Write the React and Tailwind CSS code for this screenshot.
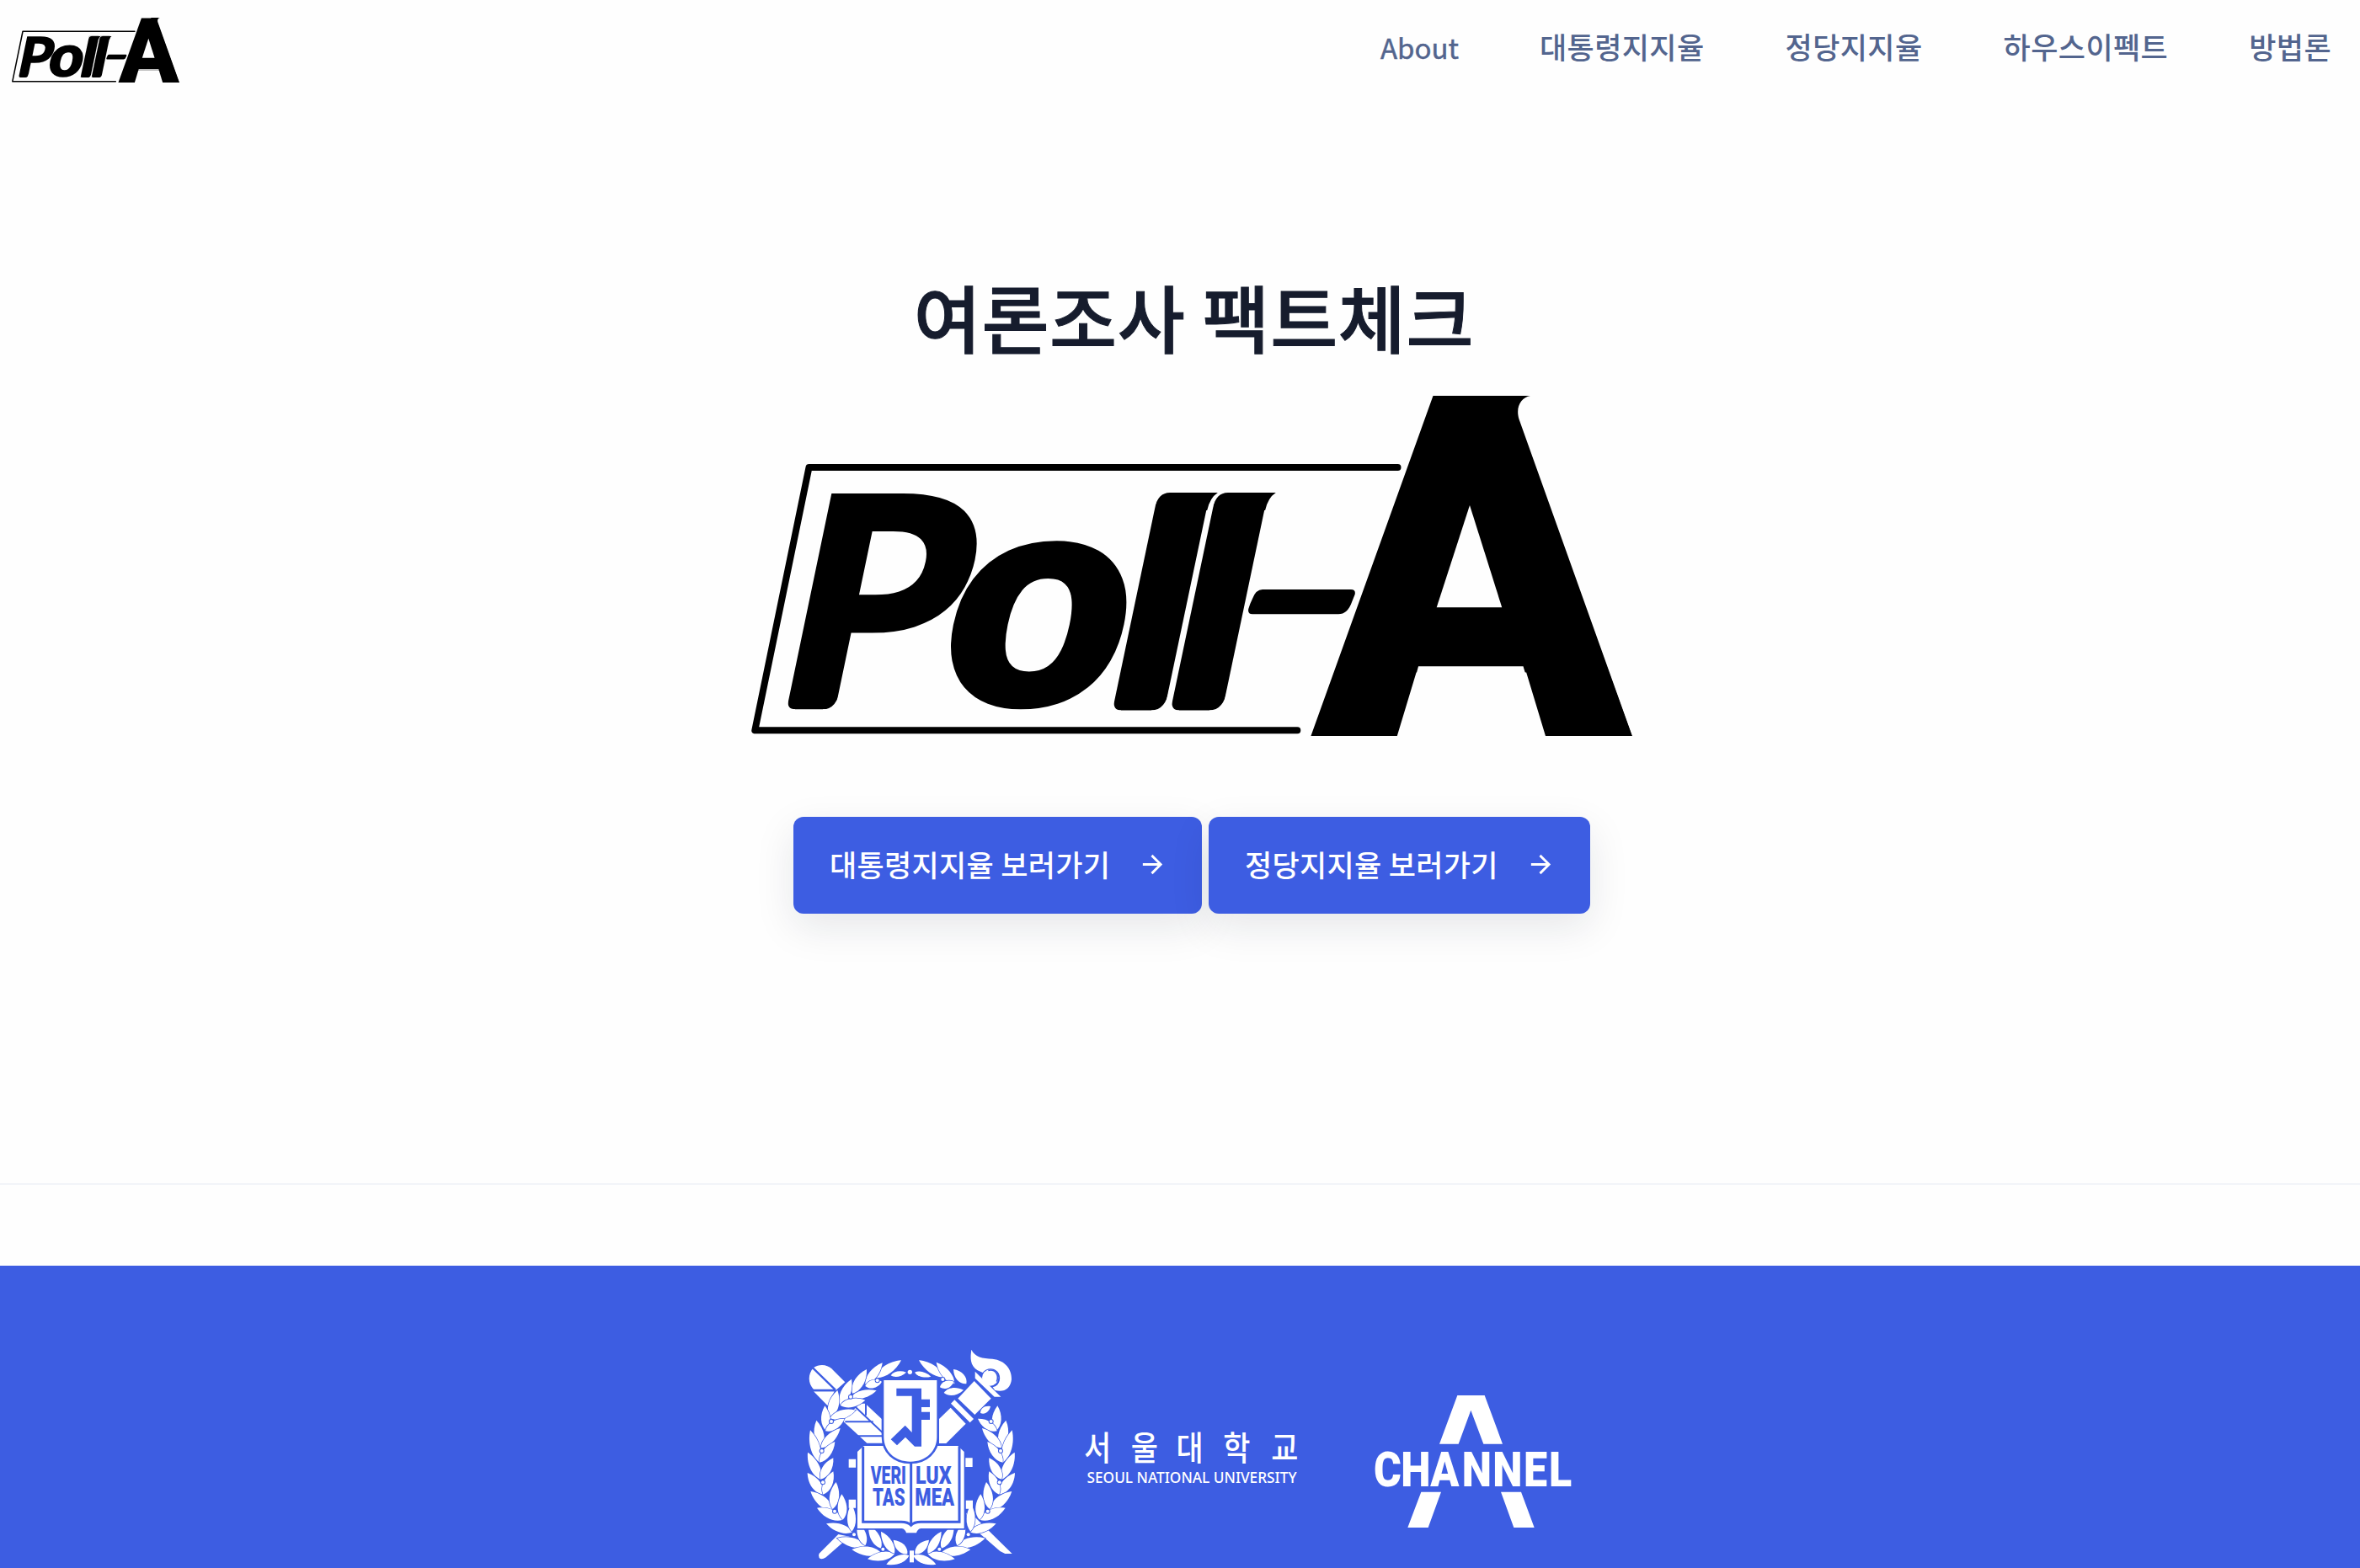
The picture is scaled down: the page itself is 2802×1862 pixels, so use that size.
import React from "react";

const NAV = ["대통령지지율", "정당지지율", "하우스이펙트", "방법론"];

function StemTrim({ dx = 0 }) {
  return (
    <g transform={`translate(${dx} 0)`}>
      <g className="fill-[#fefefe]">
        <path d="M1371 603Q1375 585 1389 584.9V583H1374.5Z" />
        <path d="M1322.6 832Q1321.5 843.5 1331 843.5V845H1318Z" />
        <path d="M1388 819Q1384 843.5 1367 843.5V846H1388Z" />
      </g>
      <path d="M1430 606L1433.2 606Q1436.5 591 1445.9 585H1430Z" />
    </g>
  );
}

function PollLogo({ className }) {
  return (
    <svg viewBox="892 470 1046 404" className={className} role="img" aria-label="Poll-A">
      <path
        d="M1659.5 555H960.5L896.3 867.3H1540.3"
        fill="none"
        stroke="#000"
        strokeWidth="8"
        strokeLinecap="round"
        strokeLinejoin="round"
      />
      <g fontSize="100" fontFamily="'Noto Sans', sans-serif">
        <text fontWeight="700" transform="matrix(3.775 0 -0.747 3.59 902 842.3)">P</text>
        <text fontWeight="800" transform="matrix(3.748 0 -0.731 3.514 1095 838.8)">o</text>
        <text fontWeight="800" transform="matrix(3.64 0 -0.714 3.401 1295.3 843.5)">l</text>
        <text fontWeight="800" transform="matrix(3.64 0 -0.714 3.401 1364.2 843.5)">l</text>
      </g>
      <g className="fill-[#fefefe]">
        <path d="M936 831Q934 842.3 944 842.3V845H930Z" />
        <path d="M998 816Q994 842.3 977 842.3V845H1000Z" />
      </g>
      <StemTrim dx={68.9} />
      <StemTrim />
      <path d="M1499 700H1604Q1610 700 1608.6 706L1605 715Q1600 729.3 1589 729.3H1487Q1481 729.3 1482.3 723Q1484 717 1487 711Q1491 700 1499 700Z" />
      <text
        fontSize="100"
        fontFamily="Roboto, sans-serif"
        fontWeight="900"
        transform="matrix(5.561 0 0 5.69 1557.5 874)"
      >
        A
      </text>
      <path d="M1760 470H1817C1806 472 1799 483 1803.6 498L1937.9 874H1925Z" />
      <path d="M1745 560L1800 730H1690Z" />
      <g className="fill-[#fefefe]">
        <path d="M1745 600L1783.2 721.2H1705.7Z" />
        <path d="M1684 791.3H1808.5L1811 799.5H1681.8Z" />
      </g>
    </svg>
  );
}

function Arrow() {
  return (
    <svg viewBox="0 0 24 24" className="size-[35px] fill-white">
      <path d="m12 4-1.41 1.41L16.17 11H4v2h12.17l-5.58 5.59L12 20l8-8z" />
    </svg>
  );
}

function CtaButton({ children, className }) {
  return (
    <a
      className={`flex h-[115px] items-center justify-between rounded-[12px] bg-[#3d5de2] pl-[43px] pr-[41px] pb-[3px] text-[35px] leading-[40px] font-medium tracking-[0.3px] whitespace-nowrap text-white shadow-[0_16px_48px_rgba(22,28,45,0.1)] ${className}`}
    >
      <span className="-mt-px">{children}</span>
      <Arrow />
    </a>
  );
}

/* Laurel leaves as [base x, base y, tip x, tip y, width] */
const UPPER_LEFT = [
  [298, 138, 390, 76, 30],
  [353, 130, 408, 119, 17],
  [262, 162, 323, 85, 28],
  [262, 168, 322, 152, 26],
  [216, 194, 267, 108, 32],
  [212, 208, 302, 184, 26],
  [173, 236, 213, 143, 32],
  [173, 236, 262, 218, 28],
  [137, 280, 163, 183, 34],
  [137, 282, 228, 254, 28],
];
const UPPER_RIGHT = [
  [542, 136, 453, 76, 28],
  [438, 119, 496, 134, 17],
  [580, 160, 515, 83, 28],
  [528, 172, 578, 152, 24],
  [622, 160, 576, 108, 28],
  [542, 192, 612, 182, 24],
  [672, 264, 708, 240, 20],
];
const SIDE = [
  [124, 328, 118, 238, 30],
  [120, 328, 188, 284, 27],
  [106, 388, 88, 290, 32],
  [104, 388, 173, 318, 28],
  [99, 440, 66, 325, 31],
  [99, 440, 154, 366, 28],
  [103, 500, 57, 404, 31],
  [103, 500, 148, 424, 30],
  [112, 554, 56, 477, 32],
  [112, 554, 148, 472, 30],
  [146, 610, 67, 543, 32],
  [146, 606, 158, 510, 31],
  [182, 644, 90, 602, 31],
  [182, 644, 178, 553, 30],
  [216, 688, 123, 658, 28],
  [214, 686, 212, 588, 28],
  [264, 738, 162, 710, 30],
  [262, 736, 236, 655, 28],
  [318, 762, 214, 750, 30],
  [318, 746, 274, 664, 30],
  [366, 766, 270, 784, 28],
  [366, 764, 318, 686, 28],
  [418, 772, 337, 803, 26],
  [412, 766, 362, 716, 28],
];
const SIDE_DOTS = [
  [141, 294],
  [107, 399],
  [111, 511],
  [153, 614],
  [222, 697],
  [325, 749],
];

function Leaf({ leaf: [bx, by, tx, ty, w] }) {
  const dx = tx - bx;
  const dy = ty - by;
  const n = Math.hypot(dx, dy);
  const ox = (-dy / n) * w * 0.72;
  const oy = (dx / n) * w * 0.72;
  const p = (t, s) => `${bx + dx * t + ox * s} ${by + dy * t + oy * s}`;
  return (
    <path
      d={`M${bx} ${by}C${p(0.22, 1)} ${p(0.65, 1)} ${tx} ${ty}C${p(0.65, -1)} ${p(0.22, -1)} ${bx} ${by}Z`}
      stroke="#3d5de2"
      strokeWidth="4"
      paintOrder="stroke"
    />
  );
}

function Side() {
  return (
    <>
      {SIDE.map((l, i) => (
        <Leaf key={i} leaf={l} />
      ))}
      {SIDE_DOTS.map(([x, y]) => (
        <circle key={y} cx={x} cy={y} r="6" stroke="#3d5de2" strokeWidth="6" paintOrder="stroke" />
      ))}
    </>
  );
}

function Emblem() {
  const blue = "#3d5de2";
  return (
    <svg viewBox="0 0 840 816" className="h-[272px] w-[280px] shrink-0" fill="#fff">
      {/* crossed pen */}
      <path d="M78 102C98 88 126 90 142 106L190 154L158 182L78 180C58 158 56 126 78 102Z" />
      <path d="M78 187H152L128 238Z" />
      <path d="M72 100L156 182M66 183H156" fill="none" stroke={blue} strokeWidth="7" />
      <path d="M180 290L244 230H262L326 290V371H268Z" />
      <path
        d="M190 295H290M236 346H326M264 228V272M222 238L326 336"
        fill="none"
        stroke={blue}
        strokeWidth="6"
      />
      <path d="M622 620L650 632L785 765H760L742 756L622 652Z" />
      <path d="M166 696L206 704L122 778Q106 788 98 780Q94 770 98 764Z" />
      {/* torch */}
      <path d="M640 38C652 64 680 70 715 71C762 76 784 110 783 144C780 176 756 192 724 183L716 172C744 166 748 132 733 116C716 100 692 104 680 120L662 112C634 94 636 66 640 38Z" />
      <circle cx="707" cy="138" r="29" />
      <path d="M700 112C726 106 740 130 730 152" fill="none" stroke={blue} strokeWidth="5" />
      <path d="M653 116L745 206H722L653 140Z" />
      <path d="M650 150L710 212L652 270L592 212Z" />
      <path d="M580 217L648 285L635 298L567 230Z" />
      <path d="M566 245L620 302L550 372H525V285Z" />

      {UPPER_LEFT.map((l, i) => (
        <Leaf key={i} leaf={l} />
      ))}
      {UPPER_RIGHT.map((l, i) => (
        <Leaf key={i} leaf={l} />
      ))}
      {[
        [305, 148],
        [210, 206],
        [538, 144],
      ].map(([x, y]) => (
        <circle key={x} cx={x} cy={y} r="6" stroke={blue} strokeWidth="6" paintOrder="stroke" />
      ))}
      <circle cx="421" cy="118" r="8" />
      <Side />
      <g transform="matrix(-1 0 0 1 851 0)">
        <Side />
      </g>
      <rect x="420" y="754" width="15" height="42" />

      {/* book */}
      <path d="M203 428h26v30h-26zM618 424h26v32h-26zM203 572h26v30h-26zM620 575h25v30h-25z" />
      <path
        d="M234 402L256 381H592L614 402V675H460Q448 677 444 691H408Q404 677 392 675H234Z"
        stroke={blue}
        strokeWidth="10"
        paintOrder="stroke"
      />
      <path
        d="M254 383V652H390Q414 652 425 664Q436 652 460 652H597V383"
        fill="none"
        stroke={blue}
        strokeWidth="9"
      />
      <path d="M425 436V660" stroke={blue} strokeWidth="9" />
      <path
        d="M328 147H517V348C517 400 478 437 423 437C366 437 328 400 328 348Z"
        stroke={blue}
        strokeWidth="16"
        paintOrder="stroke"
      />
      <path
        fill={blue}
        d="M373 176H462V215H492V243H462V260H492V288H462V383H438L405 350L375 379L353 358L404 308L428 333V203H373Z"
      />
      <g fill={blue} fontFamily="Roboto, sans-serif" fontWeight="900" fontSize="87">
        <text x="281" y="517" textLength="127" lengthAdjust="spacingAndGlyphs">VERI</text>
        <text x="441" y="517" textLength="128" lengthAdjust="spacingAndGlyphs">LUX</text>
        <text x="288" y="594" textLength="116" lengthAdjust="spacingAndGlyphs">TAS</text>
        <text x="439" y="594" textLength="140" lengthAdjust="spacingAndGlyphs">MEA</text>
      </g>
    </svg>
  );
}

function UniversityName() {
  return (
    <svg viewBox="0 0 290 100" className="mt-[90px] h-[100px] w-[290px] shrink-0" fill="#fff">
      <text
        transform="scale(0.92 1.04)"
        x="18.5 79 137.5 198 260"
        y="51.5"
        fontSize="38"
        fontWeight="500"
        fontFamily="'Noto Sans CJK KR', sans-serif"
      >
        서울대학교
      </text>
      <text
        x="20.5"
        y="81"
        fontSize="17.5"
        fontWeight="500"
        textLength="249"
        lengthAdjust="spacingAndGlyphs"
        fontFamily="'Noto Sans', sans-serif"
      >
        SEOUL NATIONAL UNIVERSITY
      </text>
    </svg>
  );
}

function ChannelLogo() {
  return (
    <svg viewBox="0 0 840 570" className="mt-[50px] h-[190px] w-[280px] shrink-0" fill="#fff">
      <path d="M361 51H458L522 224H454L409 104L365 224H297Z" />
      <path d="M232 395H303L257 522H184ZM516 395H588L635 522H562Z" />
      <text
        transform="scale(0.865 1)"
        x="73 185 306.4 436 563 690 794"
        y="374"
        fontSize="174"
        fontWeight="900"
        fontFamily="Roboto, sans-serif"
      >
        CHANNEL
      </text>
    </svg>
  );
}

export default function App() {
  return (
    <div className="flex h-[1862px] w-full flex-col overflow-hidden bg-[#fefefe] font-['Noto_Sans_CJK_KR',sans-serif]">
      <header className="flex h-[120px] shrink-0 items-start justify-between pr-[34px] pl-[14px]">
        <PollLogo className="mt-[21px] h-[77px] w-[199px]" />
        <nav className="mt-[35px] flex items-baseline gap-[96px] text-[35px] leading-[40px] font-medium tracking-[0.4px] whitespace-nowrap text-[#53658e]">
          <a className="text-[33px] font-normal tracking-normal [-webkit-text-stroke:0.5px_#53658e]">
            About
          </a>
          {NAV.map((t) => (
            <a key={t}>{t}</a>
          ))}
        </nav>
      </header>

      <main className="flex h-[1285px] shrink-0 flex-col items-center pt-[205px] pl-[28px]">
        <h1 className="pl-[5px] text-[87px] leading-[100px] font-medium tracking-[0.6px] whitespace-nowrap text-[#161c2d] [-webkit-text-stroke:1px_#161c2d]">
          여론조사 팩트체크
        </h1>
        <PollLogo className="mt-[45px] h-[404px] w-[1046px] shrink-0" />
        <div className="mt-[96px] flex gap-2">
          <CtaButton className="w-[485px]">대통령지지율 보러가기</CtaButton>
          <CtaButton className="w-[453px]">정당지지율 보러가기</CtaButton>
        </div>
      </main>

      <hr className="h-[2px] shrink-0 border-0 bg-[#f2f4f8]" />

      <footer className="mt-[96px] flex grow items-start justify-center gap-[50px] bg-[#3d5de2] pt-[87px] pl-[28px]">
        <Emblem />
        <UniversityName />
        <ChannelLogo />
      </footer>
    </div>
  );
}
